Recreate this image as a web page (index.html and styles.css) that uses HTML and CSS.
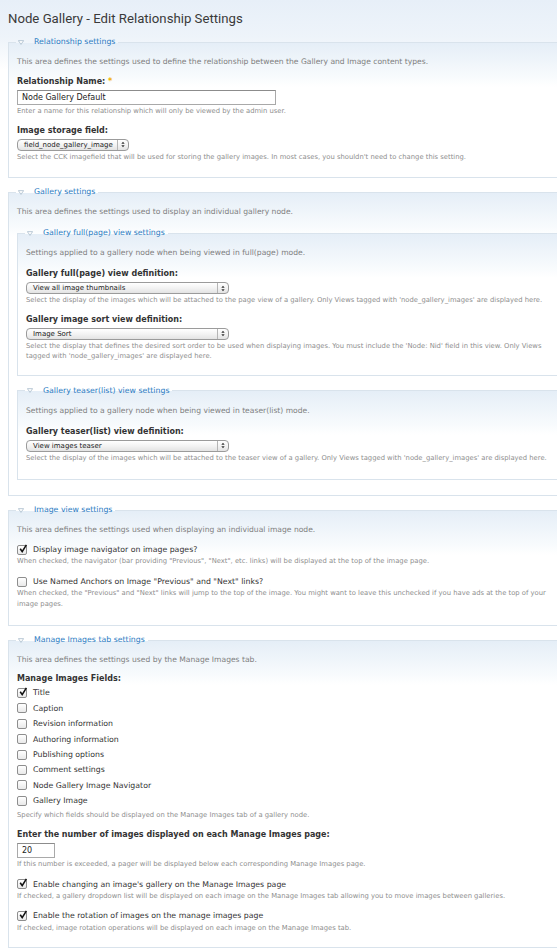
FILE: index.html
```html
<!DOCTYPE html>
<html>
<head>
<meta charset="utf-8">
<link rel="stylesheet" href="styles.css">
</head>
<body>
<div class="page">
  <h1 class="title">Node Gallery - Edit Relationship Settings</h1>

  <fieldset class="fs fs-rel">
    <legend><svg class="tri" viewBox="0 0 8 6"><path d="M0.5 0.5 H7.5 L4 5.5 Z"/></svg><a>Relationship settings</a></legend>
    <p class="desc">This area defines the settings used to define the relationship between the Gallery and Image content types.</p>
    <div class="item">
      <label class="lbl">Relationship Name: <span class="req">*</span></label>
      <div class="textbox wide">Node Gallery Default</div>
      <div class="help">Enter a name for this relationship which will only be viewed by the admin user.</div>
    </div>
    <div class="item">
      <label class="lbl">Image storage field:</label>
      <div class="select s-field"><span class="sv">field_node_gallery_image</span><span class="arr"><svg viewBox="0 0 6 10"><path d="M3 1 L5.5 4 H0.5 Z M3 9 L5.5 6 H0.5 Z"/></svg></span></div>
      <div class="help">Select the CCK imagefield that will be used for storing the gallery images. In most cases, you shouldn't need to change this setting.</div>
    </div>
  </fieldset>

  <fieldset class="fs fs-gal">
    <legend><svg class="tri" viewBox="0 0 8 6"><path d="M0.5 0.5 H7.5 L4 5.5 Z"/></svg><a>Gallery settings</a></legend>
    <p class="desc">This area defines the settings used to display an individual gallery node.</p>

    <fieldset class="fs sub sub-full">
      <legend><svg class="tri" viewBox="0 0 8 6"><path d="M0.5 0.5 H7.5 L4 5.5 Z"/></svg><a>Gallery full(page) view settings</a></legend>
      <p class="desc">Settings applied to a gallery node when being viewed in full(page) mode.</p>
      <div class="item">
        <label class="lbl">Gallery full(page) view definition:</label>
        <div class="select s-long"><span class="sv">View all image thumbnails</span><span class="arr"><svg viewBox="0 0 6 10"><path d="M3 1 L5.5 4 H0.5 Z M3 9 L5.5 6 H0.5 Z"/></svg></span></div>
        <div class="help">Select the display of the images which will be attached to the page view of a gallery. Only Views tagged with 'node_gallery_images' are displayed here.</div>
      </div>
      <div class="item">
        <label class="lbl">Gallery image sort view definition:</label>
        <div class="select s-long"><span class="sv">Image Sort</span><span class="arr"><svg viewBox="0 0 6 10"><path d="M3 1 L5.5 4 H0.5 Z M3 9 L5.5 6 H0.5 Z"/></svg></span></div>
        <div class="help">Select the display that defines the desired sort order to be used when displaying images. You must include the 'Node: Nid' field in this view. Only Views<br>tagged with 'node_gallery_images' are displayed here.</div>
      </div>
    </fieldset>

    <fieldset class="fs sub sub-teaser">
      <legend><svg class="tri" viewBox="0 0 8 6"><path d="M0.5 0.5 H7.5 L4 5.5 Z"/></svg><a>Gallery teaser(list) view settings</a></legend>
      <p class="desc">Settings applied to a gallery node when being viewed in teaser(list) mode.</p>
      <div class="item">
        <label class="lbl">Gallery teaser(list) view definition:</label>
        <div class="select s-long"><span class="sv">View images teaser</span><span class="arr"><svg viewBox="0 0 6 10"><path d="M3 1 L5.5 4 H0.5 Z M3 9 L5.5 6 H0.5 Z"/></svg></span></div>
        <div class="help">Select the display of the images which will be attached to the teaser view of a gallery. Only Views tagged with 'node_gallery_images' are displayed here.</div>
      </div>
    </fieldset>
  </fieldset>

  <fieldset class="fs fs-img">
    <legend><svg class="tri" viewBox="0 0 8 6"><path d="M0.5 0.5 H7.5 L4 5.5 Z"/></svg><a>Image view settings</a></legend>
    <p class="desc">This area defines the settings used when displaying an individual image node.</p>
    <div class="item check-item">
      <div class="cb-row"><span class="cb on"><svg viewBox="0 0 10 10"><path d="M2.2 4.8 L4.2 7.6 L8.4 0.8"/></svg></span><span class="cb-text">Display image navigator on image pages?</span></div>
      <div class="help">When checked, the navigator (bar providing "Previous", "Next", etc. links) will be displayed at the top of the image page.</div>
    </div>
    <div class="item check-item">
      <div class="cb-row"><span class="cb"></span><span class="cb-text">Use Named Anchors on Image "Previous" and "Next" links?</span></div>
      <div class="help">When checked, the "Previous" and "Next" links will jump to the top of the image. You might want to leave this unchecked if you have ads at the top of your<br>image pages.</div>
    </div>
  </fieldset>

  <fieldset class="fs fs-man">
    <legend><svg class="tri" viewBox="0 0 8 6"><path d="M0.5 0.5 H7.5 L4 5.5 Z"/></svg><a>Manage Images tab settings</a></legend>
    <p class="desc">This area defines the settings used by the Manage Images tab.</p>
    <div class="item">
      <label class="lbl">Manage Images Fields:</label>
      <div class="checklist">
        <div class="cb-row"><span class="cb on"><svg viewBox="0 0 10 10"><path d="M2.2 4.8 L4.2 7.6 L8.4 0.8"/></svg></span><span class="cb-text">Title</span></div>
        <div class="cb-row"><span class="cb"></span><span class="cb-text">Caption</span></div>
        <div class="cb-row"><span class="cb"></span><span class="cb-text">Revision information</span></div>
        <div class="cb-row"><span class="cb"></span><span class="cb-text">Authoring information</span></div>
        <div class="cb-row"><span class="cb"></span><span class="cb-text">Publishing options</span></div>
        <div class="cb-row"><span class="cb"></span><span class="cb-text">Comment settings</span></div>
        <div class="cb-row"><span class="cb"></span><span class="cb-text">Node Gallery Image Navigator</span></div>
        <div class="cb-row"><span class="cb"></span><span class="cb-text">Gallery Image</span></div>
      </div>
      <div class="help">Specify which fields should be displayed on the Manage Images tab of a gallery node.</div>
    </div>
    <div class="item">
      <label class="lbl">Enter the number of images displayed on each Manage Images page:</label>
      <div class="textbox narrow">20</div>
      <div class="help">If this number is exceeded, a pager will be displayed below each corresponding Manage Images page.</div>
    </div>
    <div class="item check-item">
      <div class="cb-row"><span class="cb on"><svg viewBox="0 0 10 10"><path d="M2.2 4.8 L4.2 7.6 L8.4 0.8"/></svg></span><span class="cb-text">Enable changing an image's gallery on the Manage Images page</span></div>
      <div class="help">If checked, a gallery dropdown list will be displayed on each image on the Manage Images tab allowing you to move images between galleries.</div>
    </div>
    <div class="item check-item">
      <div class="cb-row"><span class="cb on"><svg viewBox="0 0 10 10"><path d="M2.2 4.8 L4.2 7.6 L8.4 0.8"/></svg></span><span class="cb-text">Enable the rotation of images on the manage images page</span></div>
      <div class="help">If checked, image rotation operations will be displayed on each image on the Manage Images tab.</div>
    </div>
  </fieldset>
</div>
</body>
</html>
```

FILE: styles.css
```css
html {
  overflow: hidden;
  background: #fff;
}
body {
  margin: 0;
  font-family: "DejaVu Sans", Verdana, sans-serif;
  color: #494949;
  background: linear-gradient(#e7eff8 0, #eef4fa 38px, #fff 70px) no-repeat;
}
.page {
  width: 600px;
  padding: 8px 0 0 8px;
}
.title {
  margin: 0 0 6px;
  font-family: Roboto, "Liberation Sans", Arial, sans-serif;
  font-weight: normal;
  font-size: 13.2px;
  line-height: 22px;
  color: #3a3a3a;
}
.fs {
  margin: 0 0 8px;
  padding: 0 8px 16px;
  border: 1px solid #d9e3ec;
  background: linear-gradient(#e5eef7 0, #f8fbfd 34px, #fff 44px);
}
.fs legend {
  display: flex;
  align-items: center;
  padding: 0 3px 0 2px;
  margin-left: -1px;
  font-size: 7.8px;
  line-height: 12px;
  color: #2a7bc2;
}
.tri {
  width: 6px;
  height: 5px;
  margin-right: 10px;
  fill: #fff;
  stroke: #9ab0c4;
  stroke-width: 0.9;
}
.desc {
  margin: 8px 0 0;
  font-size: 7.6px;
  line-height: 11px;
  color: #808080;
}
.item {
  margin-top: 8px;
}
.fs-rel .desc + .item {
  margin-top: 9px;
}
.sub .desc + .item {
  margin-top: 10px;
}
.lbl {
  display: block;
  font-weight: bold;
  font-size: 8px;
  line-height: 12px;
  color: #333;
  margin-bottom: 2px;
}
.req {
  color: #f2b200;
}
.textbox {
  box-sizing: border-box;
  height: 15px;
  border: 1px solid #a9a9a9;
  border-top-color: #8c8c8c;
  background: #fff;
  font-size: 8px;
  line-height: 13px;
  padding: 0 4px;
  color: #222;
}
.textbox.wide { width: 259px; }
.textbox.narrow { width: 38px; }
.help {
  margin-top: 1px;
  font-size: 6.8px;
  line-height: 10.5px;
  color: #8e8e8e;
}
.select {
  box-sizing: border-box;
  display: flex;
  align-items: center;
  height: 12px;
  border: 1px solid #9b9b9b;
  border-radius: 4px;
  background: linear-gradient(#fff, #f3f3f3 50%, #e3e3e3);
  font-size: 7px;
  color: #222;
}
.select .sv {
  flex: 1;
  padding-left: 6px;
  white-space: nowrap;
  overflow: hidden;
}
.select .arr {
  width: 10px;
  height: 100%;
  border-left: 1px solid #b5b5b5;
  display: flex;
  align-items: center;
  justify-content: center;
}
.select .arr svg {
  width: 4px;
  height: 7px;
  fill: #333;
}
.s-field { width: 112px; }
.s-long { width: 203px; }

.fs-rel { padding-bottom: 15px; }
.fs-gal { padding-bottom: 15px; }
.sub {
  margin: 10px 0 0;
  padding-bottom: 16px;
}
.sub-full { padding-bottom: 13px; }
.sub-teaser { margin-top: 9px; }
.fs-img { padding-bottom: 16px; }
.fs-man { padding-bottom: 14px; }

.cb-row {
  display: flex;
  align-items: center;
  height: 15.4px;
  font-size: 7.8px;
  color: #333;
}
.check-item .cb-row {
  height: 13.4px;
}
.cb {
  box-sizing: border-box;
  width: 10px;
  height: 10px;
  border: 1px solid #8e8e8e;
  border-radius: 2px;
  background: linear-gradient(#fff, #e9e9e9);
  margin-right: 6px;
  position: relative;
  flex: none;
}
.cb svg {
  position: absolute;
  left: 0;
  top: -2px;
  width: 10px;
  height: 10px;
  fill: none;
  stroke: #111;
  stroke-width: 1.6;
}
.check-item .help { margin-top: 0; }
.checklist { margin-top: -2px; }
.checklist + .help { margin-top: 2px; }
```
